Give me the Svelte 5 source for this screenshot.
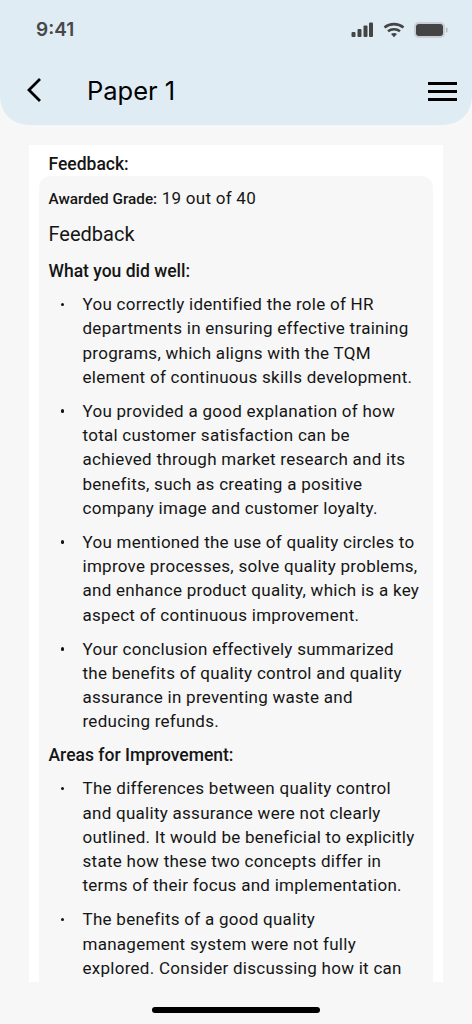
<script>
  const wellPoints = [
    ['You correctly identified the role of HR', 'departments in ensuring effective training', 'programs, which aligns with the TQM', 'element of continuous skills development.'],
    ['You provided a good explanation of how', 'total customer satisfaction can be', 'achieved through market research and its', 'benefits, such as creating a positive', 'company image and customer loyalty.'],
    ['You mentioned the use of quality circles to', 'improve processes, solve quality problems,', 'and enhance product quality, which is a key', 'aspect of continuous improvement.'],
    ['Your conclusion effectively summarized', 'the benefits of quality control and quality', 'assurance in preventing waste and', 'reducing refunds.']
  ];
  const improvePoints = [
    ['The differences between quality control', 'and quality assurance were not clearly', 'outlined. It would be beneficial to explicitly', 'state how these two concepts differ in', 'terms of their focus and implementation.'],
    ['The benefits of a good quality', 'management system were not fully', 'explored. Consider discussing how it can']
  ];
</script>

<div class="page">
  <header class="top">
    <div class="status">
      <span class="time">9:41</span>
      <div class="status-icons">
        <svg width="24" height="16" viewBox="0 0 24 16" fill="#444">
          <rect x="0.5" y="10" width="4" height="5" rx="1" />
          <rect x="6.5" y="7" width="4" height="8" rx="1" />
          <rect x="12.5" y="3.5" width="4" height="11.5" rx="1" />
          <rect x="18" y="0.5" width="4" height="14.5" rx="1" />
        </svg>
        <svg width="22" height="16" viewBox="0 0 22 16" fill="none" stroke="#444" stroke-width="2.6">
          <path d="M1.5 5.5c5.400-4.500 13.600-4.500 19 0" />
          <path d="M5 9.300c3.400-2.800 8.600-2.800 12 0" />
          <path d="M11 15.200l-3-3.200c1.800-1.300 4.200-1.300 6 0z" fill="#444" stroke="none" />
        </svg>
        <svg width="36" height="18" viewBox="0 0 36 18">
          <rect x="1" y="1" width="31" height="16" rx="5" fill="#c8ced2" />
          <rect x="3" y="3" width="27" height="12" rx="3" fill="#444" />
          <rect x="33" y="6.500" width="1.500" height="5" rx="0.700" fill="#b5bcc0" />
        </svg>
      </div>
    </div>
    <div class="nav">
      <svg class="back" width="16" height="26" viewBox="0 0 16 26" fill="none" stroke="#000" stroke-width="2.800">
        <path d="M14 2L3 13l11 11" />
      </svg>
      <h1>Paper 1</h1>
      <div class="menu"><span></span><span></span><span></span></div>
    </div>
  </header>

  <main class="card">
    <h2>Feedback:</h2>
    <section class="panel">
      <p class="grade"><strong>Awarded Grade:</strong> 19 out of 40</p>
      <h3>Feedback</h3>
      <h4>What you did well:</h4>
      <ul>
        {#each wellPoints as point}
          <li>{#each point as line}<span class="line">{line}</span>{/each}</li>
        {/each}
      </ul>
      <h4>Areas for Improvement:</h4>
      <ul>
        {#each improvePoints as point}
          <li>{#each point as line}<span class="line">{line}</span>{/each}</li>
        {/each}
      </ul>
    </section>
  </main>

  <div class="home-bar"></div>
</div>

<style>
  :global(body) {
    background: #f7f7f7;
    font-family: Roboto, "Liberation Sans", sans-serif;
  }

  .page {
    height: 1024px;
    overflow: hidden;
    display: flex;
    flex-direction: column;
    background: #f7f7f7;
    color: #151515;
  }

  .top {
    flex: none;
    height: 125px;
    background: #dfecf4;
    border-radius: 0 0 28px 28px;
  }

  .status {
    height: 59px;
    display: flex;
    align-items: center;
    justify-content: space-between;
    padding: 0 23px 0 36px;
  }

  .time {
    font-family: Inter, sans-serif;
    font-size: 19px;
    font-weight: 600;
    color: #484848;
  }

  .status-icons {
    display: flex;
    align-items: center;
    gap: 8px;
  }

  .nav {
    display: flex;
    align-items: center;
    height: 62px;
    padding: 0 15px 0 26px;
  }

  .back {
    flex: none;
  }

  h1 {
    margin: 0 0 0 45px;
    flex: 1;
    font-size: 25.500px;
    font-weight: 400;
    font-family: Inter, sans-serif;
    color: #000;
  }

  .menu {
    display: flex;
    flex-direction: column;
    gap: 5px;
    width: 29px;
    margin-top: 2px;
  }

  .menu span {
    height: 3px;
    background: #000;
  }

  .card {
    flex: none;
    height: 837px;
    margin: 20px 29px 0;
    padding: 0 10px;
    background: #fff;
    overflow: hidden;
  }

  h2 {
    margin: 0;
    padding: 7px 9.500px 0;
    height: 31px;
    box-sizing: border-box;
    font-size: 17.500px;
    line-height: 24px;
    font-weight: 500;
  }

  .panel {
    background: #f7f7f7;
    border-radius: 12px;
    padding: 10px 9.500px 30px;
  }

  .grade {
    margin: 0;
    font-size: 17px;
    line-height: 24px;
    letter-spacing: 0.270px;
  }

  .grade strong {
    font-size: 15.300px;
    font-weight: 500;
    letter-spacing: 0;
  }

  h3 {
    margin: 11px 0 0;
    font-size: 20px;
    line-height: 24px;
    font-weight: 400;
  }

  h4 {
    margin: 13px 0 0;
    font-size: 17.500px;
    line-height: 24px;
    font-weight: 500;
  }

  ul + h4 {
    margin-top: 9.600px;
  }

  ul {
    list-style: none;
    margin: 9px 0 0;
    padding: 0 0 0 34px;
  }

  li {
    position: relative;
    margin-bottom: 9.750px;
    font-size: 17px;
    letter-spacing: 0.270px;
    line-height: 24.250px;
  }

  li::before {
    content: "";
    position: absolute;
    left: -22px;
    top: 10.500px;
    width: 3.500px;
    height: 3.500px;
    border-radius: 50%;
    background: #111;
  }

  .line {
    display: block;
    white-space: nowrap;
  }

  .home-bar {
    flex: none;
    width: 168px;
    height: 6px;
    margin: 25px auto 0;
    border-radius: 3px;
    background: #000;
  }
</style>
